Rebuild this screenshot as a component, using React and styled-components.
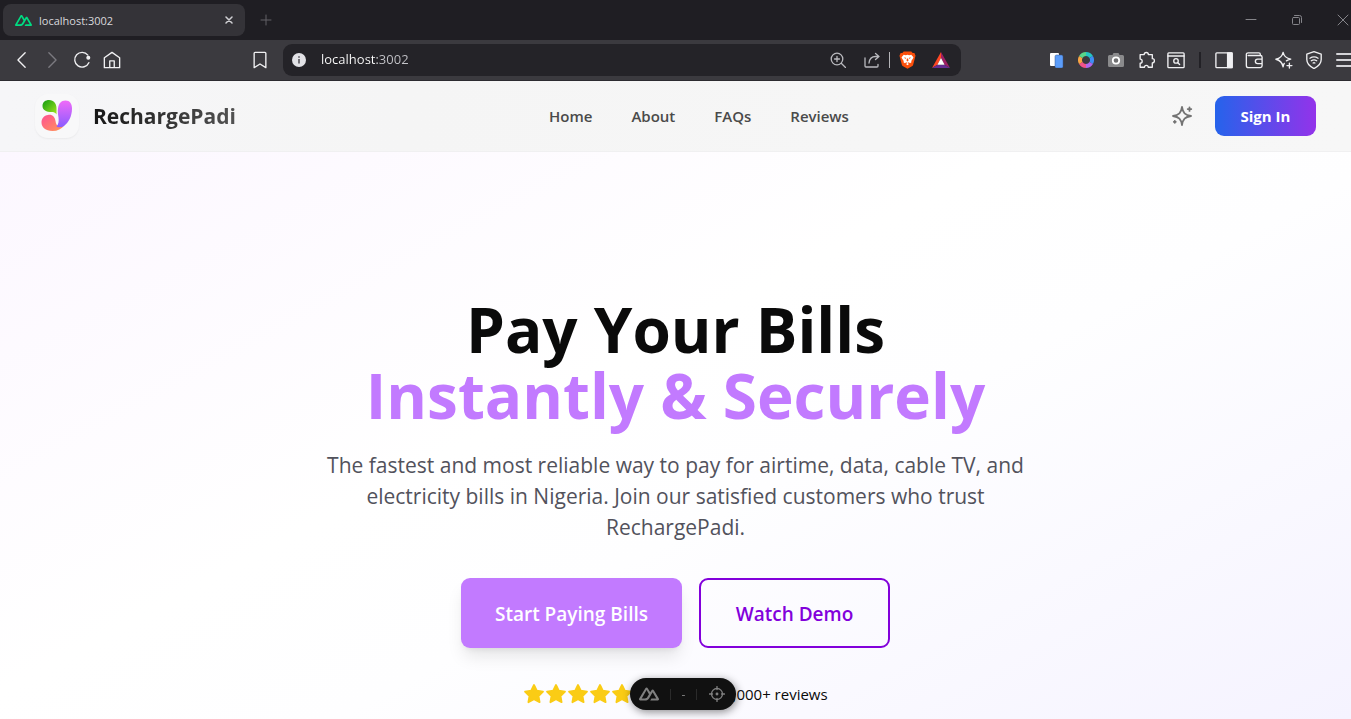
import React from "react";
import styled, { createGlobalStyle } from "styled-components";

const GlobalStyle = createGlobalStyle`
  *, *::before, *::after { box-sizing: border-box; }
  html, body { margin: 0; padding: 0; }
  body {
    font-family: "Open Sans", "Noto Sans", sans-serif;
    color: #0a0a0a;
    overflow-x: hidden;
  }
  button { font: inherit; border: 0; background: none; padding: 0; cursor: pointer; color: inherit; }
  svg { display: block; flex: none; }
`;

const Window = styled.div`
  display: flex;
  flex-direction: column;
  height: 100vh;
  overflow: hidden;
`;

/* ---------- browser frame ---------- */

const TabStrip = styled.div`
  display: flex;
  align-items: center;
  flex: none;
  height: 40px;
  padding-left: 3px;
  background: #1f1e23;
`;

const Tab = styled.div`
  display: flex;
  align-items: center;
  gap: 8px;
  width: 242px;
  height: 32px;
  padding: 0 8px 0 12px;
  border-radius: 8px;
  background: #343338;
  color: #d8d8dc;
`;

const TabTitle = styled.span`
  flex: 1;
  font-size: 11px;
`;

const IconButton = styled.button`
  display: flex;
  align-items: center;
  justify-content: center;
  flex: none;
  width: 16px;
  height: 24px;
  color: ${(p) => p.$color || "#f0f0f2"};
`;

const NewTabButton = styled(IconButton)`
  margin-left: 13px;
`;

const WindowControls = styled.div`
  display: flex;
  gap: 30px;
  margin-left: auto;
`;

const Toolbar = styled.div`
  display: grid;
  grid-template-columns: 252px minmax(0, 1fr) 391px;
  align-items: center;
  flex: none;
  height: 41px;
  margin-right: -1px;
  background: #3b3a3f;
  border-bottom: 1px solid #2c2b30;
`;

const ToolGroup = styled.div`
  display: flex;
  align-items: center;
  gap: 14px;
  padding-left: ${(p) => (p.$start ? "14px" : "0")};
  justify-content: ${(p) => (p.$start ? "flex-start" : "flex-end")};
`;

const ToolDivider = styled.span`
  width: 2px;
  height: 16px;
  margin: 0 1px;
  background: #222126;
`;

const AddressArea = styled.div`
  display: flex;
  align-items: center;
  gap: 15px;
`;

const AddressBar = styled.label`
  display: flex;
  align-items: center;
  flex: 1;
  min-width: 0;
  height: 32px;
  padding: 0 12px 0 9px;
  gap: 15px;
  border-radius: 9px;
  background: #242328;
`;

const AddressInput = styled.input`
  flex: 1;
  min-width: 0;
  border: 0;
  outline: 0;
  padding: 0 0 2px;
  height: 24px;
  font-family: "Open Sans", sans-serif;
  font-size: 13px;
  color: transparent;
  background: linear-gradient(90deg, #ffffff 56px, #c4c4c9 56px);
  background-clip: text;
  -webkit-background-clip: text;
`;

const AddressActions = styled.div`
  display: flex;
  align-items: center;
  gap: 18px;
`;

const AddressDivider = styled.span`
  width: 1px;
  height: 16px;
  margin: 0 -9px;
  background: #b4b4b8;
`;

/* ---------- site header ---------- */

const Page = styled.div`
  display: flex;
  flex-direction: column;
  flex: 1;
  min-height: 0;
  overflow: hidden;
`;

const SiteHeader = styled.header`
  display: flex;
  align-items: center;
  justify-content: space-between;
  flex: none;
  height: 71px;
  padding: 0 35px;
  background: linear-gradient(90deg, #f6f6f8, #f5f5f5 30%, #f7f7f7);
  border-bottom: 1px solid #f0f0f1;
`;

const Brand = styled.a`
  display: flex;
  align-items: center;
  gap: 14px;
  text-decoration: none;
`;

const BrandMark = styled.span`
  display: flex;
  align-items: center;
  justify-content: center;
  width: 44px;
  height: 44px;
  border-radius: 13px;
  background: #f8f8f9;
  box-shadow: 0 1px 2px rgba(0, 0, 0, 0.05);
`;

const BrandName = styled.span`
  font-size: 21px;
  line-height: 30px;
  font-weight: 700;
  color: transparent;
  background: linear-gradient(90deg, #171717, #525252);
  background-clip: text;
  -webkit-background-clip: text;
`;

const SiteNav = styled.nav`
  display: flex;
  gap: 39px;
`;

const NavLink = styled.a`
  font-size: 15px;
  line-height: 22px;
  font-weight: 600;
  color: #4a4a4a;
  text-decoration: none;
`;

const HeaderActions = styled.div`
  display: flex;
  align-items: center;
  gap: 13px;
`;

const ThemeButton = styled.button`
  display: flex;
  align-items: center;
  justify-content: center;
  width: 40px;
  height: 40px;
  color: #737373;
`;

const SignInButton = styled.button`
  width: 101px;
  height: 40px;
  border-radius: 9px;
  font-size: 15px;
  font-weight: 700;
  color: #fff;
  background: linear-gradient(90deg, #2563eb, #9333ea);
`;

/* ---------- hero ---------- */

const Hero = styled.main`
  display: flex;
  flex-direction: column;
  align-items: center;
  flex: 1;
  padding: 144px 24px 0;
  text-align: center;
  background: linear-gradient(152deg, #fcf7ff 0%, #ffffff 42%, #fefeff 58%, #f5f3ff 100%);
`;

const Title = styled.h1`
  margin: 0;
  font-size: 62px;
  line-height: 66px;
  font-weight: 700;
  color: #0a0a0a;
`;

const TitleAccent = styled.span`
  display: block;
  color: #c27aff;
`;

const Lead = styled.p`
  max-width: 704px;
  margin: 22px 0 0;
  font-size: 21px;
  line-height: 31px;
  color: #52525c;
`;

const Actions = styled.div`
  display: flex;
  gap: 17px;
  margin-top: 35px;
`;

const ActionButton = styled.button`
  width: ${(p) => p.$width};
  height: 70px;
  padding-top: 2px;
  border-radius: 9px;
  font-size: 19px;
  font-weight: 600;
  color: ${(p) => (p.$outline ? "#8200db" : "#ffffff")};
  background: ${(p) => (p.$outline ? "transparent" : "#c27aff")};
  border: ${(p) => (p.$outline ? "2px solid #8200db" : "0")};
  box-shadow: ${(p) =>
    p.$outline ? "none" : "0 11px 17px -3px rgba(0,0,0,0.1), 0 4px 7px -4px rgba(0,0,0,0.1)"};
`;

const Rating = styled.div`
  display: flex;
  align-items: center;
  gap: 5px;
  margin-top: 34px;
  font-size: 15px;
  line-height: 24px;
`;

const Stars = styled.div`
  display: flex;
`;

const DevTools = styled.div`
  position: fixed;
  left: 50%;
  bottom: 9px;
  display: flex;
  align-items: center;
  justify-content: space-between;
  width: 106px;
  height: 32px;
  margin-left: -46px;
  padding: 0 11px 0 9px;
  border-radius: 16px;
  background: #111111;
  color: #808080;
  font-size: 12px;
  box-shadow: 1px 2px 8px rgba(0, 0, 0, 0.45);
`;

const DevDivider = styled.span`
  width: 1px;
  height: 11px;
  background: #2b2b2b;
`;

/* ---------- drawings ---------- */

const Line = ({ size = 18, width = 1.5, children, box = 20 }) => (
  <svg
    width={size}
    height={size}
    viewBox={`0 0 ${box} ${box}`}
    fill="none"
    stroke="currentColor"
    strokeWidth={width}
    strokeLinecap="round"
    strokeLinejoin="round"
    aria-hidden="true"
  >
    {children}
  </svg>
);

const NuxtMark = ({ size }) => (
  <svg width={size} height={size} viewBox="0 0 24 24" fill="currentColor" aria-hidden="true">
    <path d="M13.464 19.83h8.922c.283 0 .562-.073.807-.21a1.59 1.59 0 0 0 .591-.573 1.53 1.53 0 0 0 0-1.566L17.792 7.414a1.59 1.59 0 0 0-.591-.573 1.652 1.652 0 0 0-1.614 0 1.59 1.59 0 0 0-.59.573L13.463 9.99l-2.995-5.037a1.59 1.59 0 0 0-.591-.573 1.653 1.653 0 0 0-1.614 0 1.59 1.59 0 0 0-.591.573L.217 17.481a1.53 1.53 0 0 0 0 1.566c.14.238.345.436.59.573.245.138.524.21.807.21h5.6c2.219 0 3.855-.968 4.981-2.857l2.734-4.7 1.464-2.516 4.395 7.554h-5.852l-1.472 2.519Zm-6.343-2.521-3.909-.001L9.072 7.231l2.923 5.039-1.957 3.365c-.748 1.223-1.597 1.674-2.917 1.674Z" />
  </svg>
);

const BrandLogo = () => (
  <svg width="32" height="32" viewBox="0 0 32 32" aria-hidden="true">
    <defs>
      <linearGradient id="leaf" x1="0" y1="0" x2="1" y2="1">
        <stop offset="0" stopColor="#119c10" />
        <stop offset="1" stopColor="#a2e51f" />
      </linearGradient>
      <linearGradient id="petal" x1="0" y1="0" x2="0" y2="1">
        <stop offset="0" stopColor="#f06bf8" />
        <stop offset="1" stopColor="#8b5cff" />
      </linearGradient>
      <linearGradient id="curl" x1="0" y1="0" x2="1" y2="1">
        <stop offset="0" stopColor="#ff4f94" />
        <stop offset="1" stopColor="#ff9a55" />
      </linearGradient>
    </defs>
    <path d="M7 15c4-1 7 2 7.500 6 .3 3 1.500 5 4 5.500 2 .3 4-.500 5-1.500-3 4-7 6-12 6C4.500 31 .500 27 .500 22.500c0-4 2.500-7 6.500-7.500Z" fill="url(#curl)" />
    <path d="M24.500.500c4.500 0 6.500 3.500 6.500 8 0 8-3.500 14-8 17.500-2 1.500-6 1.500-7.500.5 2-2 2.500-5 2-9-.5-3-1-6-.5-9 .5-5 3-8 7.500-8Z" fill="url(#petal)" />
    <path d="M1.500 6c0-4 3-6 6.500-6 5 0 7.500 4 7.500 8v6.500c-1-2-3-2.500-5-2.500-5 0-9-2-9-6Z" fill="url(#leaf)" />
  </svg>
);

const BraveLion = () => (
  <svg width="17" height="18" viewBox="0 0 18 19" aria-hidden="true">
    <path d="M5 .5h8l1.500 1.700 1.800-.2 1.200 3-.5 1.800-2 7.600c-.2.800-.7 1.300-1.300 1.700L9 18.700l-4.700-2.600c-.600-.400-1.100-.900-1.300-1.700L1 6.800.500 5l1.200-3 1.800.2L5 .5Z" fill="#fb4f0b" />
    <path d="m5 4 2.200.4L9 4l1.800.4L13 4l2.300 2.600-.500 1.400-1.800 2.600.2 1.400-1.500 1-1.400-1L9 12.600l1.300.9-.2.800L9 15l-1.100-.700-.200-.800 1.300-.900-1.300-.600-1.400 1-1.500-1 .200-1.400L3.200 8l-.500-1.400L5 4Z" fill="#fff" />
    <path d="m5.200 6.800 2.300.4-.6 1.300-1.700-1.700Zm7.600 0-2.300.4.600 1.300 1.700-1.700ZM8.300 8h1.400l.3 2.200-1 .8-1-.8.3-2.200Z" fill="#fb4f0b" />
  </svg>
);

const BatTriangle = () => (
  <svg width="18" height="16" viewBox="0 0 18 16" aria-hidden="true">
    <path d="M9 0 0 16l5.500-3.300L9 6V0Z" fill="#ff4724" />
    <path d="M9 0v6l3.500 6.700L18 16 9 0Z" fill="#9e1f63" />
    <path d="m0 16 5.500-3.300h7L18 16H0Z" fill="#662d91" />
    <path d="m9 6-3.600 6.700h7.200L9 6Z" fill="#fff" />
  </svg>
);

const InfoDot = () => (
  <svg width="14" height="14" viewBox="0 0 14 14" aria-hidden="true">
    <circle cx="7" cy="7" r="7" fill="#e2e2e6" />
    <path d="M6.200 3.200h1.600v1.600H6.200zM6.200 6h1.600v4.600H6.200z" fill="#55545a" />
  </svg>
);

const Star = () => (
  <svg width="22" height="22" viewBox="0 0 22 22" aria-hidden="true">
    <path
      d="m11 2 2.800 5.700 6.200.9-4.500 4.400 1.100 6.200L11 16.300l-5.600 2.900 1.100-6.200L2 8.600l6.200-.9L11 2Z"
      fill="#facc15"
      stroke="#facc15"
      strokeWidth="1.800"
      strokeLinejoin="round"
    />
  </svg>
);

const ColorRing = () => (
  <svg width="16" height="16" viewBox="0 0 16 16" fill="none" strokeWidth="4" aria-hidden="true">
    <path d="M8 2a6 6 0 0 1 5.200 3" stroke="#23c4c4" />
    <path d="M13.200 5a6 6 0 0 1 0 6" stroke="#3f8cf5" />
    <path d="M13.200 11A6 6 0 0 1 8 14" stroke="#b067ee" />
    <path d="M8 14a6 6 0 0 1-5.200-3" stroke="#f25389" />
    <path d="M2.800 11a6 6 0 0 1 0-6" stroke="#f8a443" />
    <path d="M2.800 5A6 6 0 0 1 8 2" stroke="#58d68a" />
  </svg>
);

const Camera = () => (
  <svg width="16" height="14" viewBox="0 0 16 14" aria-hidden="true">
    <path d="M1.500 2h3l1-2h5l1 2h3A1.500 1.500 0 0 1 16 3.500v9a1.500 1.500 0 0 1-1.500 1.500h-13A1.500 1.500 0 0 1 0 12.500v-9A1.500 1.500 0 0 1 1.500 2Z" fill="#8a8a8c" />
    <circle cx="8" cy="7.500" r="3.200" fill="#707072" stroke="#fff" strokeWidth="1.800" />
  </svg>
);

const Documents = () => (
  <svg width="16" height="16" viewBox="0 0 16 16" aria-hidden="true">
    <rect x="2" y="1" width="9" height="13" rx="1" fill="#fff" />
    <rect x="7" y="3" width="8" height="13" rx="1.500" fill="#5c9dfa" stroke="#34568c" strokeWidth=".5" />
  </svg>
);

const links = ["Home", "About", "FAQs", "Reviews"];

export default function App() {
  return (
    <Window>
      <GlobalStyle />
      <TabStrip>
        <Tab>
          <IconButton as="span" $color="#00dc82"><NuxtMark size={17} /></IconButton>
          <TabTitle>localhost:3002</TabTitle>
          <IconButton aria-label="Close tab" $color="#d0d0d4">
            <Line size={8} box={8} width={1.5}><path d="m1 1 6 6M7 1 1 7" /></Line>
          </IconButton>
        </Tab>
        <NewTabButton aria-label="New tab" $color="#626167">
          <Line size={12} box={12} width={1}><path d="M6 1v10M1 6h10" /></Line>
        </NewTabButton>
        <WindowControls>
          <IconButton aria-label="Minimize" $color="#85858a">
            <Line size={12} box={12} width={1}><path d="M1 5.500h10" /></Line>
          </IconButton>
          <IconButton aria-label="Restore" $color="#85858a">
            <Line size={12} box={12} width={1}>
              <rect x="1.500" y="3.500" width="7" height="7" rx="1" />
              <path d="M3.500 1.500h5a2 2 0 0 1 2 2v5" />
            </Line>
          </IconButton>
          <IconButton aria-label="Close window" $color="#85858a">
            <Line size={12} box={12} width={1}><path d="m1 1 10 10M11 1 1 11" /></Line>
          </IconButton>
        </WindowControls>
      </TabStrip>

      <Toolbar>
        <ToolGroup $start>
          <IconButton aria-label="Back">
            <Line><path d="m13.500 2-8 8 8 8" /></Line>
          </IconButton>
          <IconButton aria-label="Forward" $color="#7b7a80">
            <Line><path d="m6.500 2 8 8-8 8" /></Line>
          </IconButton>
          <IconButton aria-label="Reload">
            <Line>
              <path d="M16.500 4.500A8.200 8.200 0 1 0 17.600 13" />
              <circle cx="17" cy="7.500" r="1.500" fill="currentColor" />
            </Line>
          </IconButton>
          <IconButton aria-label="Home page">
            <Line>
              <path d="M1.500 7.500v11h17v-11L10 1.500l-8.500 6ZM7.500 18.500V11h5v7.500" />
            </Line>
          </IconButton>
        </ToolGroup>

        <AddressArea>
          <IconButton aria-label="Bookmark">
            <Line><path d="M4.500 1.500h11a1 1 0 0 1 1 1v16L10 14.500l-6.500 4v-16a1 1 0 0 1 1-1Z" /></Line>
          </IconButton>
          <AddressBar>
            <InfoDot />
            <AddressInput aria-label="Address" defaultValue="localhost:3002" />
            <AddressActions>
              <IconButton aria-label="Zoom" $color="#b9b9be">
                <Line size={16} box={16} width={1.3}>
                  <circle cx="7" cy="7" r="5.800" />
                  <path d="m11.500 11.500 4 4M7 4.500v5M4.500 7h5" />
                </Line>
              </IconButton>
              <IconButton aria-label="Share" $color="#b9b9be">
                <Line size={16} box={16} width={1.3}>
                  <path d="M1 6v8a1 1 0 0 0 1 1h11a1 1 0 0 0 1-1v-1.500M11.500 1.500 15 4.500l-3.500 3M15 4.500h-3.500C7.500 4.500 5.500 7 5 11" />
                </Line>
              </IconButton>
              <AddressDivider />
              <IconButton aria-label="Brave Shields"><BraveLion /></IconButton>
              <IconButton aria-label="Brave Rewards"><BatTriangle /></IconButton>
            </AddressActions>
          </AddressBar>
        </AddressArea>

        <ToolGroup>
          <IconButton aria-label="Documents"><Documents /></IconButton>
          <IconButton aria-label="Colors"><ColorRing /></IconButton>
          <IconButton aria-label="Screenshot"><Camera /></IconButton>
          <IconButton aria-label="Extensions">
            <Line>
              <path d="M3.500 4H8a2.300 2.300 0 0 1 4.600 0H17v4.500a2.300 2.300 0 0 1 0 4.700V18h-4.500a2 2 0 0 0-4.200 0H3.500v-4.500a2.200 2.200 0 0 0 0-4.500V4Z" />
            </Line>
          </IconButton>
          <IconButton aria-label="Search tabs">
            <Line>
              <rect x="1" y="2" width="18" height="16.500" rx="1" />
              <path d="M1 5.500h18" />
              <circle cx="10" cy="11" r="2.500" />
              <path d="m12 13 2 2" />
            </Line>
          </IconButton>
          <ToolDivider />
          <IconButton aria-label="Sidebar">
            <Line>
              <rect x="1" y="2" width="18" height="16.500" rx="1" />
              <path d="M14 2h5v16.500h-5z" fill="currentColor" />
            </Line>
          </IconButton>
          <IconButton aria-label="Wallet">
            <Line>
              <path d="M17 5V3.500a1.500 1.500 0 0 0-1.500-1.500h-12A2 2 0 0 0 1.500 4v12a2.500 2.500 0 0 0 2.500 2.500h13a2 2 0 0 0 2-2V7a2 2 0 0 0-2-2H3.500M19 9h-5a2.500 2.500 0 0 0 0 5h5" />
            </Line>
          </IconButton>
          <IconButton aria-label="Leo AI">
            <Line>
              <path d="M9 1.500c1 4.500 3 6.500 8.500 7.500-1.800.4-3.500 1-4.800 2M9 1.500C8 6 6 8 1 9.200c5 1.200 7 3.300 8 8.300.3-1.500.7-2.700 1.300-3.700M16 13.500v5.500M13.300 16.200h5.500" />
            </Line>
          </IconButton>
          <IconButton aria-label="VPN">
            <Line>
              <path d="M10 .8 18 3.500v6c0 4.500-3 7.500-8 10-5-2.500-8-5.500-8-10v-6L10 .8Z" />
              <path d="M5.500 8c3-2 6-2 9 0M7 10.800c2-1.300 4-1.300 6 0M9 13.300c.7-.4 1.300-.4 2 0" />
            </Line>
          </IconButton>
          <IconButton aria-label="Menu" $color="#d4d4d8">
            <Line size={16} box={16} width={2}><path d="M1 2h14M1 8h14M1 14h14" /></Line>
          </IconButton>
        </ToolGroup>
      </Toolbar>

      <Page>
        <SiteHeader>
          <Brand href="#home">
            <BrandMark><BrandLogo /></BrandMark>
            <BrandName>RechargePadi</BrandName>
          </Brand>
          <SiteNav>
            {links.map((label) => (
              <NavLink key={label} href={`#${label.toLowerCase()}`}>{label}</NavLink>
            ))}
          </SiteNav>
          <HeaderActions>
            <ThemeButton aria-label="Change theme">
              <Line size={22} box={22} width={1.8}>
                <path d="M11 2c.9 6 3 8.100 9 9-6 .9-8.100 3-9 9-.9-6-3-8.100-9-9 6-.9 8.100-3 9-9ZM18.500 2.300v3.600M16.700 4.100h3.600M3.800 15.800v2M2.800 16.800h2" />
              </Line>
            </ThemeButton>
            <SignInButton>Sign In</SignInButton>
          </HeaderActions>
        </SiteHeader>

        <Hero>
          <Title>
            Pay Your Bills
            <TitleAccent>Instantly &amp; Securely</TitleAccent>
          </Title>
          <Lead>
            The fastest and most reliable way to pay for airtime, data, cable TV, and electricity
            bills in Nigeria. Join our satisfied customers who trust RechargePadi.
          </Lead>
          <Actions>
            <ActionButton $width="221px">Start Paying Bills</ActionButton>
            <ActionButton $width="191px" $outline>Watch Demo</ActionButton>
          </Actions>
          <Rating>
            <Stars>
              {[1, 2, 3, 4, 5].map((n) => <Star key={n} />)}
            </Stars>
            <span>4.9/5 from 10,000+ reviews</span>
          </Rating>
        </Hero>
      </Page>

      <DevTools>
        <NuxtMark size={20} />
        <DevDivider />
        <span>-</span>
        <DevDivider />
        <Line size={16} box={16} width={1.3}>
          <circle cx="8" cy="8" r="5.500" />
          <circle cx="8" cy="8" r=".8" fill="currentColor" />
          <path d="M8 .5v3M8 12.500v3M.5 8h3M12.500 8h3" />
        </Line>
      </DevTools>
    </Window>
  );
}
